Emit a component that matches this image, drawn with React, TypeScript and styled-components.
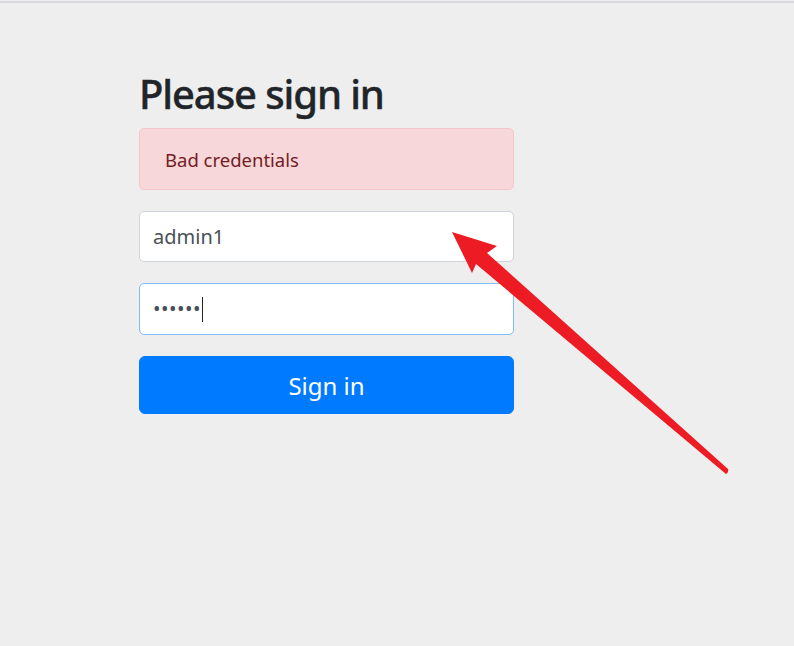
import styled, { createGlobalStyle } from 'styled-components'

const GlobalStyle = createGlobalStyle`
  html, body {
    margin: 0;
    padding: 0;
    background: #eeeeee;
  }
  body {
    font-family: "Noto Sans", "Open Sans", "Liberation Sans", sans-serif;
    color: #212529;
  }
`

const Page = styled.div`
  position: relative;
  width: 794px;
  height: 646px;
  box-sizing: border-box;
  margin-top: 1px;
  border-top: 2px solid #dad9de;
  overflow: hidden;
`

const Container = styled.div`
  padding: 67px 0 0 139px;
`

const Form = styled.form`
  width: 375px;
  display: flex;
  flex-direction: column;
`

const Heading = styled.h2`
  margin: 0 0 10px;
  font-size: 40px;
  font-weight: 500;
  letter-spacing: -1.1px;
  -webkit-text-stroke: 0.4px #212529;
  line-height: 48px;
  color: #212529;
`

const Alert = styled.div`
  box-sizing: border-box;
  height: 62px;
  padding: 16px 25px 14px;
  margin-bottom: 21px;
  background: #f8d7da;
  border: 1px solid #f5c6cb;
  border-radius: 5px;
  color: #721c24;
  font-size: 18.5px;
  line-height: 30px;
`

const Field = styled.div<{ $focused?: boolean }>`
  box-sizing: border-box;
  height: ${p => (p.$focused ? 52 : 51)}px;
  margin-bottom: 21px;
  padding: 0 13px;
  display: flex;
  align-items: center;
  background: #fff;
  border: 1px solid ${p => (p.$focused ? '#80bdff' : '#ced4da')};
  border-radius: 5px;
  color: #495057;
  font-size: 20px;
`

const Dots = styled.span`
  letter-spacing: 0.5px;
  font-size: 20px;
  line-height: 1;
`

const Caret = styled.span`
  display: inline-block;
  width: 1px;
  height: 25px;
  background: #212529;
  margin-left: 1px;
`

const Button = styled.button`
  box-sizing: border-box;
  height: 58px;
  border: 1px solid #007bff;
  border-radius: 6px;
  background: #007bff;
  color: #fff;
  font-family: inherit;
  font-size: 24px;
  line-height: 1;
  padding-top: 2px;
  cursor: pointer;
`

const Overlay = styled.svg`
  position: absolute;
  left: 0;
  top: -3px;
  pointer-events: none;
`

function Arrow() {
  return (
    <Overlay width="794" height="646" viewBox="0 0 794 646">
      <path
        d="M452 232 L497 246 L487 253 L728 469 Q729 472 726 474 L476 264 L472 273 Z"
        fill="#ed1c24"
      />
    </Overlay>
  )
}

function App() {
  return (
    <>
      <GlobalStyle />
      <Page>
        <Container>
          <Form onSubmit={e => e.preventDefault()}>
            <Heading>Please sign in</Heading>
            <Alert>Bad credentials</Alert>
            <Field>admin1</Field>
            <Field $focused>
              <Dots>••••••</Dots>
              <Caret />
            </Field>
            <Button type="submit">Sign in</Button>
          </Form>
        </Container>
        <Arrow />
      </Page>
    </>
  )
}

export default App
